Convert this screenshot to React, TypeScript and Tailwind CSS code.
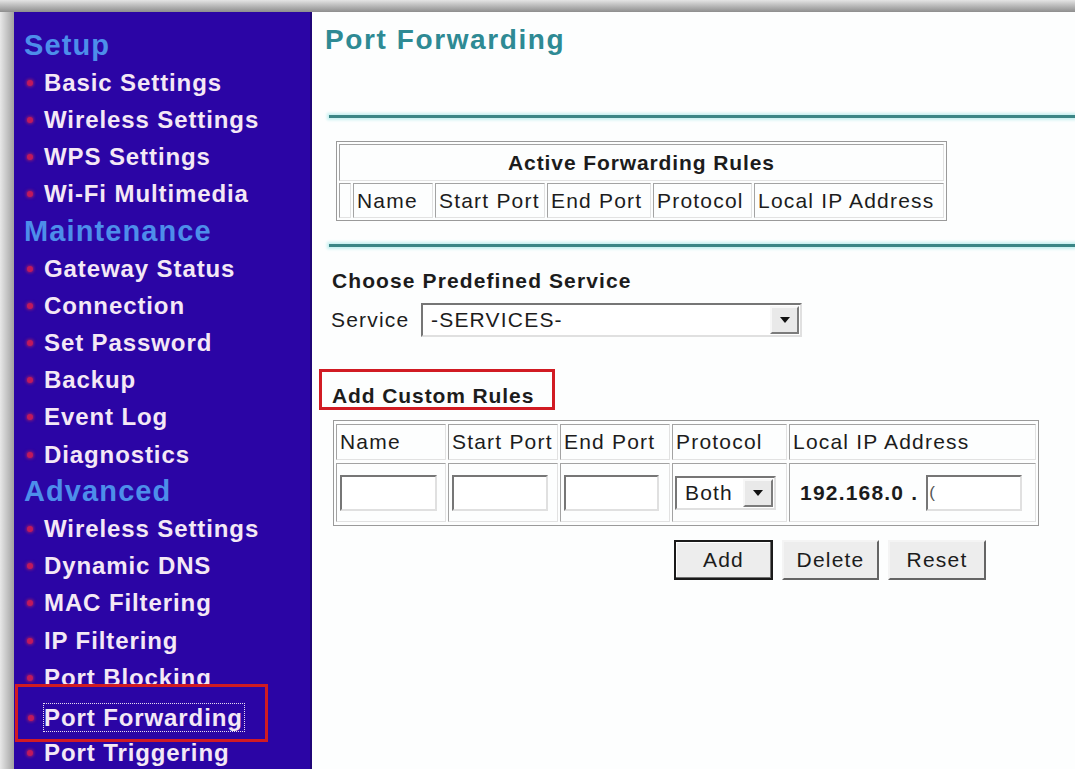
import React from "react";

type NavEntry = { label: string; heading?: boolean; active?: boolean };

const NAV: NavEntry[] = [
  { label: "Setup", heading: true },
  { label: "Basic Settings" },
  { label: "Wireless Settings" },
  { label: "WPS Settings" },
  { label: "Wi-Fi Multimedia" },
  { label: "Maintenance", heading: true },
  { label: "Gateway Status" },
  { label: "Connection" },
  { label: "Set Password" },
  { label: "Backup" },
  { label: "Event Log" },
  { label: "Diagnostics" },
  { label: "Advanced", heading: true },
  { label: "Wireless Settings" },
  { label: "Dynamic DNS" },
  { label: "MAC Filtering" },
  { label: "IP Filtering" },
  { label: "Port Blocking" },
  { label: "Port Forwarding", active: true },
  { label: "Port Triggering" },
];

function Bullet() {
  return (
    <span className="h-[6px] w-[6px] shrink-0 rounded-full bg-[#c0195c] shadow-[0_0_3px_1px_rgba(170,30,100,0.8)]" />
  );
}

function NavRow({ entry }: { entry: NavEntry }) {
  if (entry.heading) {
    return (
      <div className="flex h-[37.2px] items-center pl-[10px] text-[29px] font-bold tracking-[1.1px] text-[#4d8eea]">
        {entry.label}
      </div>
    );
  }
  if (entry.active) {
    return (
      <div className="relative z-10 -mb-[8px] -mt-[12px] ml-[1px] flex h-[58px] w-[253px] items-start border-[3px] border-[#d11b23] bg-[#2b05a5] pl-[10px] pt-[16px]">
        <span className="flex h-[29px] items-center">
          <Bullet />
        </span>
        <span className="ml-[9px] flex h-[29px] items-center border border-dotted border-[#e8ddf0] pr-[1px]">
          {entry.label}
        </span>
      </div>
    );
  }
  return (
    <div className="flex h-[37.2px] items-center pl-[13px]">
      <Bullet />
      <span className="ml-[11px]">{entry.label}</span>
    </div>
  );
}

function Rule() {
  return <div className="ml-[17px] h-[3px] bg-[#3b8686] shadow-[0_0_3px_2px_#c6f0f0]" />;
}

function DropArrow({ className }: { className: string }) {
  return (
    <span
      className={`flex items-center justify-center border-2 border-b-[#7c7c7c] border-l-[#f7f7f7] border-r-[#7c7c7c] border-t-[#f7f7f7] bg-[#e9e9e9] ${className}`}
    >
      <svg width="10" height="6" viewBox="0 0 10 6">
        <polygon points="0,0 10,0 5,6" fill="#111" />
      </svg>
    </span>
  );
}

const inset =
  "border-2 border-t-[#767676] border-l-[#767676] border-b-[#e0e0e0] border-r-[#e0e0e0] bg-white";
const cell =
  "border border-t-[#a3a3a3] border-l-[#a3a3a3] border-b-[#e2e2e2] border-r-[#e2e2e2]";

function TextBox({ width }: { width: string }) {
  return <div className={`h-[36px] ${width} ${inset}`} />;
}

export default function App() {
  return (
    <div className="flex h-[769px] w-[1075px] flex-col overflow-hidden bg-white font-['Liberation_Sans',Arial,sans-serif]">
      {/* window frame top edge */}
      <div className="h-[12px] shrink-0 bg-linear-to-b from-[#e4e4e4] to-[#8e8e8e]" />
      <div className="flex min-h-0 flex-1">
        {/* window frame left edge */}
        <div className="w-[14px] shrink-0 bg-linear-to-r from-[#e8e8e8] to-[#a2a2a2]" />

        {/* navigation */}
        <nav className="w-[298px] shrink-0 border-r-2 border-[#1f0578] bg-[#2b05a5] pt-[15px] text-[24px] font-bold tracking-[0.9px] text-[#f4e8f5]">
          {NAV.map((entry, i) => (
            <NavRow key={i} entry={entry} />
          ))}
        </nav>

        {/* page body */}
        <main className="flex-1 bg-[#fdfefe] text-[21px] tracking-[1.2px] text-[#1c1c1c]">
          <h1 className="pl-[13px] pt-[13px] text-[28px] font-bold leading-[30px] tracking-[1.6px] text-[#2e8a94]">
            Port Forwarding
          </h1>

          <div className="mt-[60px]">
            <Rule />
          </div>

          {/* active rules */}
          <div className="ml-[24px] mt-[23px] w-[611px] border border-[#9a9a9a] p-[2px]">
            <div className={`flex h-[37px] items-center justify-center font-bold tracking-[0.9px] ${cell}`}>
              Active Forwarding Rules
            </div>
            <div className="mt-[2px] grid h-[35px] grid-cols-[12px_80px_110px_104px_99px_190px] gap-x-[2px]">
              <div className={cell} />
              {["Name", "Start Port", "End Port", "Protocol", "Local IP Address"].map((h) => (
                <div key={h} className={`flex items-center overflow-hidden whitespace-nowrap pl-[3px] ${cell}`}>
                  {h}
                </div>
              ))}
            </div>
          </div>

          <div className="mt-[23px]">
            <Rule />
          </div>

          {/* predefined service */}
          <div className="ml-[20px] mt-[22px] font-bold leading-[24px] tracking-[1.1px]">Choose Predefined Service</div>
          <div className="ml-[19px] mt-[10px] flex h-[34px] items-center">
            <span className="w-[90px]">Service</span>
            <div className={`flex h-[34px] w-[381px] items-center justify-between pl-[8px] pr-[1px] ${inset}`}>
              <span>-SERVICES-</span>
              <DropArrow className="h-[28px] w-[29px]" />
            </div>
          </div>

          {/* custom rules */}
          <div className="ml-[7px] mt-[32px] h-[41px] w-[236px] border-[3px] border-[#d11b23] pl-[10px] pt-[12px] font-bold leading-[24px] tracking-[0.9px]">
            Add Custom Rules
          </div>

          <div className="ml-[21px] mt-[10px] w-[706px] border border-[#9a9a9a] px-[2px] py-[3px]">
            <div className="grid grid-cols-[110px_110px_110px_115px_247px] grid-rows-[36px_59px] gap-x-[2px] gap-y-[3px]">
              {["Name", "Start Port", "End Port", "Protocol", "Local IP Address"].map((h) => (
                <div key={h} className={`flex items-center overflow-hidden whitespace-nowrap pl-[3px] ${cell}`}>
                  {h}
                </div>
              ))}
              <div className={`flex items-center pl-[3px] ${cell}`}>
                <TextBox width="w-[97px]" />
              </div>
              <div className={`flex items-center pl-[3px] ${cell}`}>
                <TextBox width="w-[96px]" />
              </div>
              <div className={`flex items-center pl-[3px] ${cell}`}>
                <TextBox width="w-[95px]" />
              </div>
              <div className={`flex items-center pl-[2px] ${cell}`}>
                <div className={`flex h-[34px] w-[101px] items-center justify-between pl-[8px] pr-[1px] ${inset}`}>
                  <span>Both</span>
                  <DropArrow className="h-[28px] w-[30px]" />
                </div>
              </div>
              <div className={`flex items-center pl-[10px] ${cell}`}>
                <span className="font-bold tracking-[1.2px]">192.168.0 .</span>
                <div className={`ml-[8px] flex h-[36px] w-[96px] items-center pl-[1px] text-[#555] ${inset}`}>
                  <span className="text-[17px] font-light leading-none">(</span>
                </div>
              </div>
            </div>
          </div>

          {/* actions */}
          <div className="ml-[362px] mt-[14px] flex gap-[9px]">
            <button className="h-[40px] w-[99px] border-2 border-[#1a1a1a] bg-[#ededed] tracking-[1.2px] shadow-[inset_-1px_-1px_0_#707070,inset_1px_1px_0_#ffffff]">
              Add
            </button>
            <button className="h-[40px] w-[97px] border-2 border-b-[#656565] border-l-[#f4f4f4] border-r-[#656565] border-t-[#f4f4f4] bg-[#ededed] tracking-[1.2px]">
              Delete
            </button>
            <button className="h-[40px] w-[98px] border-2 border-b-[#656565] border-l-[#f4f4f4] border-r-[#656565] border-t-[#f4f4f4] bg-[#ededed] tracking-[1.2px]">
              Reset
            </button>
          </div>
        </main>
      </div>
    </div>
  );
}
